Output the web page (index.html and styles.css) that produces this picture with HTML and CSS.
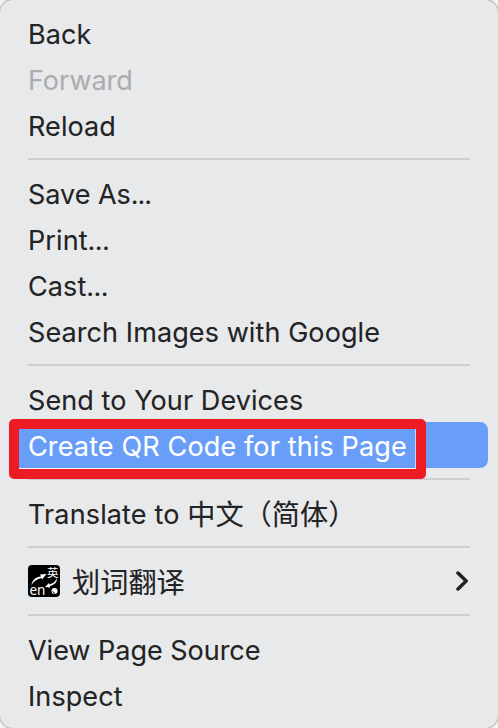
FILE: index.html
```html
<!DOCTYPE html>
<html lang="en">
<head>
<meta charset="utf-8">
<title>Context menu</title>
<link rel="stylesheet" href="styles.css">
</head>
<body>
<ul class="menu">
  <li class="item"><span class="label">Back</span></li>
  <li class="item disabled"><span class="label snug">Forward</span></li>
  <li class="item"><span class="label">Reload</span></li>
  <li class="separator"></li>
  <li class="item"><span class="label snug">Save As<span class="dots">...</span></span></li>
  <li class="item"><span class="label">Print<span class="dots">...</span></span></li>
  <li class="item"><span class="label">Cast<span class="dots">...</span></span></li>
  <li class="item"><span class="label">Search Images with Google</span></li>
  <li class="separator"></li>
  <li class="item"><span class="label">Send to Your Devices</span></li>
  <li class="item selected"><span class="label wide">Create QR Code for this Page</span><span class="marker"></span></li>
  <li class="separator"></li>
  <li class="item"><span class="label wide">Translate to <span class="cjk" lang="zh-CN">中文（简体）</span></span></li>
  <li class="separator"></li>
  <li class="item">
    <svg class="icon" viewBox="0 0 32 32">
      <rect width="32" height="32" rx="4"/>
      <text class="icon-zh" x="19" y="12">英</text>
      <text class="icon-en" x="1.5" y="29.5">en</text>
      <path class="swoosh" d="M3.5 20C4 15 8 12 13 11.5L12 9.5L18.5 9L14 14.5L13.5 13C9 14 6 16 3.5 20Z"/>
      <path class="swoosh" d="M28.5 13C30 17 26 20 22 21L22 22.5L17 22L21 18L21.5 19.5C25 18.5 28 16.5 28.5 13Z"/>
      <circle class="swoosh" cx="26.5" cy="26" r="3"/>
      <path class="slash" d="M24.5 26.5L27 28.5"/>
    </svg>
    <span class="label cjk" lang="zh-CN">划词翻译</span>
    <svg class="chevron" viewBox="0 0 14 22"><path d="M2 3L10.2 11L2 19"/></svg>
  </li>
  <li class="separator"></li>
  <li class="item"><span class="label snug">View Page Source</span></li>
  <li class="item"><span class="label">Inspect</span></li>
</ul>
</body>
</html>
```
FILE: styles.css
```css
* { box-sizing: border-box; }
body { margin: 0; background: #f3f3f3; }
.menu {
  width: 498px; height: 728px; margin: 0; padding: 10px 10px 0; list-style: none;
  background: #e8e9eb; border-radius: 13px; box-shadow: 0 0 1px 1px #b5b5b5; overflow: hidden;
  font: 27px/46px Inter, "Noto Sans CJK SC", sans-serif; letter-spacing: 0.09px; color: #222324;
  -webkit-text-stroke: 0.1px currentColor;
}
.item { position: relative; display: flex; align-items: center; height: 46px; padding: 0 18px; white-space: nowrap; }
.label { padding-top: 4px; }
.snug { letter-spacing: -0.02px; }
.wide { letter-spacing: 0.14px; }
.dots { letter-spacing: -0.6px; }
.snug .dots { letter-spacing: -1px; }
.cjk { font-size: 28.2px; line-height: 40px; letter-spacing: 0; }
.wide .cjk { position: relative; top: 1px; }
.disabled { color: #adadaf; }
.selected { background: #699ef8; color: #fff; border-radius: 8px; }
.separator { height: 22px; padding: 10px 18px; }
.separator::before { content: ""; display: block; height: 2px; background: #cdced0; }
.marker {
  position: absolute; left: -1px; top: -3px; width: 417px; height: 60px;
  border: 10px solid #ed1c24; border-radius: 5px; box-shadow: inset 0 -1px #f4f4f4, inset -1px 0 #c9d9f5;
}
.icon { width: 32px; height: 32px; margin: 0 12px 0 0; overflow: visible; -webkit-text-stroke: 0; letter-spacing: 0; }
.icon text { fill: #fff; }
.icon-zh { font: 11.5px "Noto Sans CJK SC", sans-serif; }
.icon-en { font: 13.5px "Noto Sans", sans-serif; }
.swoosh { fill: #fff; }
.slash { stroke: #000; stroke-width: 1; fill: none; }
.chevron { width: 14px; height: 22px; margin-left: auto; }
.chevron path { fill: none; stroke: #222324; stroke-width: 3.5; stroke-linecap: round; stroke-linejoin: round; }
```
